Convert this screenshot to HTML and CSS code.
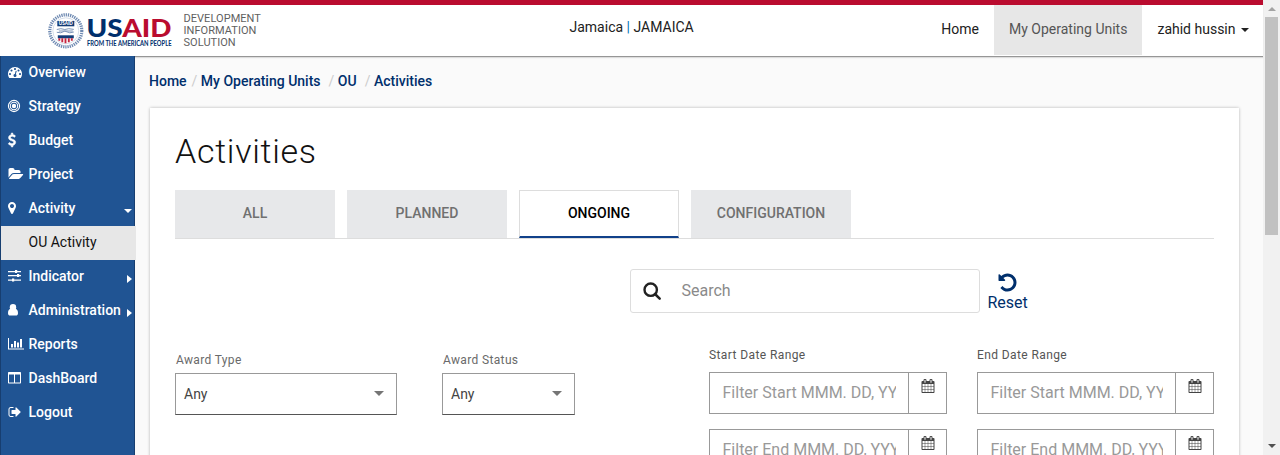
FILE: index.html
```
<!DOCTYPE html>
<html lang="en">
<head>
<meta charset="utf-8">
<title>Activities</title>
<link rel="stylesheet" href="styles.css">
</head>
<body>
<svg class="defs" aria-hidden="true">
  <symbol id="calendar" viewBox="0 0 1792 1792"><path d="M192 1664h288v-288h-288v288zm352 0h320v-288h-320v288zm-352-352h288v-320h-288v320zm352 0h320v-320h-320v320zm-352-384h288v-288h-288v288zm736 736h320v-288h-320v288zm-384-736h320v-288h-320v288zm768 736h288v-288h-288v288zm-384-352h320v-320h-320v320zm-352-864v-288q0-13-9.5-22.5t-22.5-9.5h-64q-13 0-22.5 9.5t-9.5 22.5v288q0 13 9.5 22.5t22.5 9.5h64q13 0 22.5-9.5t9.5-22.5zm736 864h288v-320h-288v320zm-384-384h320v-288h-320v288zm384 0h288v-288h-288v288zm32-480v-288q0-13-9.5-22.5t-22.5-9.5h-64q-13 0-22.5 9.5t-9.5 22.5v288q0 13 9.5 22.5t22.5 9.5h64q13 0 22.5-9.5t9.5-22.5zm384-64v1280q0 52-38 90t-90 38h-1408q-52 0-90-38t-38-90v-1280q0-52 38-90t90-38h128v-96q0-66 47-113t113-47h64q66 0 113 47t47 113v96h384v-96q0-66 47-113t113-47h64q66 0 113 47t47 113v96h128q52 0 90 38t38 90z"/></symbol>
</svg>
<div class="window">
  <div class="page">
    <header class="topbar">
      <svg class="logo" viewBox="0 0 126 40" width="126" height="40">
        <g transform="translate(-.2 4.300)">
          <circle cx="19" cy="19.500" r="16" fill="none" stroke="#6f8ab2" stroke-width="3.200" stroke-dasharray="1.300 .9"/>
          <circle cx="19" cy="19.500" r="13" fill="#fff" stroke="#b9c6da" stroke-width=".6"/>
          <path d="M10.500 9.700h17v5.300h-17z" fill="#123b77"/>
          <text x="12" y="14.200" class="seal-text" textLength="14" lengthAdjust="spacingAndGlyphs">USAID</text>
          <path d="M10 18.200l4-.8 4 .8 4-.8 5 .7M10 21l4 .5 4-1.700 5 1.700 4-.8M12 19.700h14" fill="none" stroke="#7c94b8" stroke-width="1"/>
          <path d="M11 24h16v3h-16z" fill="#123b77"/>
          <path d="M12.500 27v2.500M15.500 27v4M18.700 27v5M22 27v4M25 27v2.500" stroke="#c5243f" stroke-width="1.900"/>
        </g>
        <text x="39.500" y="30.300" class="word" textLength="85" lengthAdjust="spacingAndGlyphs"><tspan fill="#002f6c">US</tspan><tspan fill="#ba0c2f">AID</tspan></text>
        <text x="40" y="38.600" class="tagline" textLength="84.500" lengthAdjust="spacingAndGlyphs">FROM THE AMERICAN PEOPLE</text>
      </svg>
      <div class="product">DEVELOPMENT<br>INFORMATION<br>SOLUTION</div>
      <div class="country">Jamaica <span class="bar">|</span> JAMAICA</div>
      <nav class="topnav">
        <a class="topnav-link">Home</a>
        <a class="topnav-link current">My Operating Units</a>
        <a class="topnav-link user">zahid hussin <i class="caret"></i></a>
      </nav>
    </header>
    <div class="body">
      <nav class="sidebar">
        <a class="item"><svg class="icon" viewBox="0 0 1792 1792"><path d="M384 1152q0-53-37.500-90.500t-90.500-37.500-90.500 37.500-37.500 90.500 37.500 90.500 90.500 37.500 90.500-37.500 37.500-90.500zm192-448q0-53-37.500-90.500t-90.500-37.500-90.500 37.500-37.500 90.500 37.500 90.500 90.500 37.500 90.500-37.500 37.500-90.500zm428 481l101-382q6-26-7.500-48.500t-38.500-29.500-48 6.500-30 39.500l-101 382q-60 5-107 43.500t-63 98.500q-20 77 20 146t117 89 146-20 89-117q16-60-6-117t-72-91zm660-33q0-53-37.500-90.500t-90.500-37.500-90.500 37.500-37.500 90.500 37.500 90.500 90.500 37.500 90.500-37.500 37.500-90.500zm-640-640q0-53-37.500-90.500t-90.500-37.500-90.500 37.500-37.500 90.500 37.500 90.500 90.500 37.500 90.500-37.500 37.500-90.500zm448 192q0-53-37.500-90.500t-90.500-37.500-90.500 37.500-37.500 90.500 37.500 90.500 90.500 37.500 90.500-37.500 37.500-90.500zm320 448q0 261-141 483-19 29-54 29h-1402q-35 0-54-29-141-221-141-483 0-182 71-348t191-286 286-191 348-71 348 71 286 191 191 286 71 348z"/></svg>Overview</a>
        <a class="item"><svg class="icon" viewBox="0 0 14 14"><g fill="none" stroke="#fff" stroke-width="1.100"><circle cx="6" cy="7" r="5.600"/><circle cx="6" cy="7" r="3.700"/></g><circle cx="6" cy="7" r="2.200"/></svg>Strategy</a>
        <a class="item"><svg class="icon bold" viewBox="384 0 1792 1792"><path d="M1362 1185q0 153-99.500 263.500t-258.500 136.500v175q0 14-9 23t-23 9h-135q-13 0-22.500-9.500t-9.500-22.500v-175q-66-9-127.500-31t-101.500-44.500-74-48-46.500-37.500-17.500-18q-17-21-2-41l103-135q7-10 23-12 15-2 24 9l2 2q113 99 243 125 37 8 74 8 81 0 142.500-43t61.500-122q0-28-15-53t-33.500-42-58.500-37.500-66-32-80-32.500q-39-16-61.500-25t-61.500-26.500-62.500-31-56.500-35.500-53.500-42.500-43.500-49-35.500-58-21-66.500-8.500-78q0-138 98-242t255-134v-180q0-13 9.500-22.500t22.500-9.500h135q14 0 23 9t9 23v176q57 6 110.500 23t87 33.500 63.500 37.500 39 29 15 14q17 18 5 38l-81 146q-8 15-23 16-14 3-27-7-3-3-14.500-12t-39-26.500-58.500-32-74.500-26-85.500-11.500q-95 0-155 43t-60 111q0 26 8.500 48t29.500 41.500 39.500 33 56 31 60.500 27 70 27.500q53 20 81 31.500t76 35 75.500 42.500 62 50 53 63.500 31.500 76.500 13 94z"/></svg>Budget</a>
        <a class="item"><svg class="icon" viewBox="0 0 1792 1792"><path d="M1943 952q0 31-31 66l-336 396q-43 51-120.500 86.500t-143.500 35.500h-1088q-34 0-60.500-13t-26.500-43q0-31 31-66l336-396q43-51 120.500-86.500t143.500-35.500h1088q34 0 60.500 13t26.500 43zm-343-344v160h-832q-94 0-197 47.500t-164 119.500l-337 396-5 6q0-4-.5-12.500t-.5-12.500v-960q0-92 66-158t158-66h320q92 0 158 66t66 158v32h544q92 0 158 66t66 158z"/></svg>Project</a>
        <a class="item"><svg class="icon" viewBox="384 0 1792 1792"><path d="M1152 640q0-106-75-181t-181-75-181 75-75 181 75 181 181 75 181-75 75-181zm256 0q0 109-33 179l-364 774q-16 33-47.500 52t-67.500 19-67.500-19-46.500-52l-365-774q-33-70-33-179 0-212 150-362t362-150 362 150 150 362z"/></svg>Activity<i class="caret open"></i></a>
        <a class="item sub">OU Activity</a>
        <a class="item"><svg class="icon" viewBox="0 0 14 14"><path d="M0 2h7v1.300H0zM9 2h4v1.300H9zM7 1.100h2.200v3H7zM0 6h3v1.300H0zM5 6h8v1.300H5zM9 5.100h2.200v3H9zM0 10.500h5v1.300H0zM8 10.500h5v1.300H8zM4 9.600h2.200v3H4zM3 6h6v1.300H3zM6 10.500h2v1.300H6z"/></svg>Indicator<i class="caret closed"></i></a>
        <a class="item"><svg class="icon" viewBox="0 0 14 14"><circle cx="5" cy="4.200" r="3.200"/><path d="M2.700 5.800C.7 6.300 0 8 0 10.200 0 11.700.9 12.500 2.200 12.500h5.600c1.300 0 2.200-.8 2.200-2.300 0-2.200-.7-3.900-2.700-4.400-1.200 1.300-3.400 1.300-4.600 0z"/></svg>Administration<i class="caret closed"></i></a>
        <a class="item"><svg class="icon" viewBox="0 0 14 14"><path d="M0 1h1v10.500h15v1H0zM3 7h2v3.500H3zM6 4h2v6.500H6zM9 5.500h2v5H9zM12 2h2v8.500h-2z"/></svg>Reports</a>
        <a class="item"><svg class="icon" viewBox="0 0 14 14"><path d="M1 1h11c.6 0 1 .4 1 1v9.500c0 .6-.4 1-1 1H1c-.6 0-1-.4-1-1V2c0-.6.4-1 1-1zm0 2.500v8h5v-8zm6 0v8h5v-8z" fill-rule="evenodd"/></svg>DashBoard</a>
        <a class="item"><svg class="icon" viewBox="0 0 1792 1792"><path d="M704 1440q0 4 1 20t.5 26.500-3 23.500-10 19.500-20.500 6.500h-320q-119 0-203.500-84.500t-84.500-203.500v-704q0-119 84.500-203.500t203.500-84.500h320q13 0 22.500 9.500t9.500 22.500q0 4 1 20t.5 26.500-3 23.500-10 19.500-20.500 6.500h-320q-66 0-113 47t-47 113v704q0 66 47 113t113 47h312l11.500 1 11.500 3 8 5.500 7 9 2 13.500zm928-544q0 26-19 45l-544 544q-19 19-45 19t-45-19-19-45v-288h-448q-26 0-45-19t-19-45v-384q0-26 19-45t45-19h448v-288q0-26 19-45t45-19 45 19l544 544q19 19 19 45z"/></svg>Logout</a>
      </nav>
      <main class="content">
        <div class="crumbs"><a>Home</a><i>/</i><a>My Operating Units</a><i class="wide">/</i><a>OU</a><i class="wide">/</i><a>Activities</a></div>
        <section class="card">
          <h1>Activities</h1>
          <div class="tabs">
            <button class="tab">ALL</button>
            <button class="tab">PLANNED</button>
            <button class="tab active">ONGOING</button>
            <button class="tab">CONFIGURATION</button>
          </div>
          <div class="search-row">
            <div class="search"><svg viewBox="0 0 19 19" width="19" height="19"><circle cx="7.700" cy="7.700" r="6.200" fill="none" stroke="#222" stroke-width="2.400"/><path d="M12 12l4.700 4.700" stroke="#222" stroke-width="2.500" stroke-linecap="round"/></svg><span>Search</span></div>
            <a class="reset"><svg viewBox="0 0 1792 1792" width="21" height="21"><path fill="#002f6c" d="M1664 896q0 156-61 298t-164 245-245 164-298 61q-172 0-327-72.500t-264-204.500q-7-10-6.500-22.500t8.500-20.500l137-138q10-9 25-9 16 2 23 12 73 95 179 147t225 52q104 0 198.500-40.500t163.500-109.500 109.500-163.500 40.500-198.500-40.500-198.500-109.500-163.500-163.500-109.500-198.500-40.500q-98 0-188 35.500t-160 101.500l137 138q31 30 14 69-17 40-59 40h-448q-26 0-45-19t-19-45v-448q0-42 40-59 39-17 69 14l130 129q107-101 244.500-156.500t284.500-55.500q156 0 298 61t245 164 164 245 61 298z"/></svg><span>Reset</span></a>
          </div>
          <div class="filters">
            <div class="field type"><label>Award Type</label><div class="select">Any<i></i></div></div>
            <div class="field status"><label>Award Status</label><div class="select">Any<i></i></div></div>
            <div class="dates">
              <label>Start Date Range</label>
              <div class="date"><span>Filter Start MMM. DD, YYYY</span><b><svg width="14" height="14"><use href="#calendar"/></svg></b></div>
              <div class="date"><span>Filter End MMM. DD, YYYY</span><b><svg width="14" height="14"><use href="#calendar"/></svg></b></div>
            </div>
            <div class="dates end">
              <label>End Date Range</label>
              <div class="date"><span>Filter Start MMM. DD, YYYY</span><b><svg width="14" height="14"><use href="#calendar"/></svg></b></div>
              <div class="date"><span>Filter End MMM. DD, YYYY</span><b><svg width="14" height="14"><use href="#calendar"/></svg></b></div>
            </div>
          </div>
        </section>
      </main>
    </div>
  </div>
  <div class="scrollbar"><i class="up"></i><div class="thumb"></div><i class="down"></i></div>
</div>
</body>
</html>
```
FILE: styles.css
```
* { box-sizing: border-box; }
body { margin: 0; font: 14px/20px Roboto, sans-serif; color: #212121; overflow: hidden; }
i, b { font-style: normal; font-weight: 400; }
svg { display: block; flex: none; }
.defs { position: absolute; width: 0; height: 0; }
.window { display: flex; width: 1280px; height: 455px; overflow: hidden; }
.page { width: 1263px; display: flex; flex-direction: column; background: #fafafa; }

.topbar { position: relative; flex: none; display: flex; height: 57px; border-top: 5px solid #ba0c2f; border-bottom: 1px solid #969696; background: #fff; box-shadow: 0 1px 1px #ddd; }
.logo { margin: 2px 0 0 47px; overflow: visible; }
.word { font: 900 25px Lato, sans-serif; }
.tagline { font: 700 6.600px Lato, sans-serif; fill: #002f6c; }
.seal-text { font: 900 5px Lato, sans-serif; fill: #fff; }
.product { width: 100px; margin: 8px 0 0 10.500px; font-size: 11px; line-height: 12px; letter-spacing: .05px; color: #5f5f5f; }
.country { margin: 12px 0 0 286px; white-space: nowrap; }
.bar { color: #0076b6; }
.topnav { display: flex; margin-left: auto; height: 50px; }
.topnav-link { display: flex; align-items: center; padding: 0 14.500px 2px 15.500px; white-space: nowrap; }
.topnav-link.current { background: #e7e7e7; color: #555; }
.caret { border: 4px solid transparent; border-top-color: currentColor; border-bottom: 0; }
.user .caret { margin: 2px 0 0 5px; }

.body { display: flex; flex: 1; min-height: 0; }
.sidebar { flex: none; width: 136px; margin-top: -1px; z-index: 1; border-left: 1px solid #173e70; background: linear-gradient(90deg, #205493 133px, #173e70 133px 134px, transparent 134px); }
.item { display: flex; align-items: center; height: 34px; padding: 0 0 2px 7px; color: #fff; font-weight: 500; }
.icon { width: 14px; height: 14px; margin-right: 6.500px; fill: #fff; overflow: visible; }
.icon.bold { stroke: #fff; stroke-width: 70px; }
.item.sub { padding-left: 27.500px; background: #e7e7e7; color: #111; font-weight: 400; }
.item .caret.open { margin: 5px 4px 0 auto; }
.item .caret.closed { margin: 5px 4px 0 auto; border: 4px solid transparent; border-left: 5px solid #fff; border-right: 0; }

.content { flex: 1; padding: 14px 24px 0 13px; }
.crumbs { display: flex; height: 20px; font-weight: 500; color: #002f6c; white-space: nowrap; }
.crumbs i { margin: 0 3.500px 0 5px; color: #ccc; }
.crumbs i.wide { margin-left: 8px; }
.card { height: 400px; margin-top: 17px; margin-left: 1px; padding: 22px 25px; background: #fff; box-shadow: 0 0 3px rgba(0,0,0,.28); }
h1 { margin: 0; font-size: 34px; line-height: 42px; font-weight: 300; letter-spacing: .7px; color: #111; }
.tabs { display: flex; gap: 12px; height: 49px; margin-top: 18px; border-bottom: 1px solid #ddd; }
.tab { width: 160px; height: 48px; padding: 0 0 2px; border: 0; background: #e7e8ea; font: 500 14px Roboto, sans-serif; color: #707070; }
.tab.active { padding-bottom: 1px; background: #fff; border: 1px solid #ddd; border-bottom: 2px solid #11418a; color: #000; }
.search-row { display: flex; margin: 30px 0 0 455px; gap: 7.500px; }
.search { display: flex; align-items: center; width: 350px; height: 44px; padding-left: 12px; border: 1px solid #ddd; border-radius: 3px; color: #8a8a8a; font-size: 16px; }
.search span { margin-left: 19.500px; }
.reset { display: flex; flex-direction: column; align-items: center; padding-top: 3px; font-size: 16px; line-height: 20px; color: #002f6c; }
.filters { display: flex; padding-top: 34px; }
label { display: block; font-size: 12px; line-height: 16px; letter-spacing: .35px; color: #6a6a6a; }
.field { padding-top: 5px; }
.field label { padding-left: 1px; }
.type { width: 222px; }
.status { width: 133px; margin-left: 45px; }
.select { display: flex; align-items: center; justify-content: space-between; height: 42px; margin-top: 5px; padding: 0 12px 1px 8px; border: 1px solid #999; border-bottom-color: #555; color: #444; }
.select i { border: 5px solid transparent; border-top-color: #757575; border-bottom: 0; }
.dates { width: 238px; margin-left: 134px; }
.dates.end { width: 237px; margin-left: 30px; }
.dates label { color: #555; letter-spacing: .4px; }
.date { display: flex; height: 42px; margin-top: 9px; border: 1px solid #999; font-size: 16px; color: #999; }
.date + .date { margin-top: 15px; }
.date span { flex: 1; min-width: 0; margin: 0 12px 0 12.500px; overflow: hidden; line-height: 40px; white-space: nowrap; }
.date b { width: 38px; padding: 6px 0 0 11.500px; border-left: 1px solid #999; }
.date svg { fill: #444; }

.scrollbar { display: flex; flex-direction: column; width: 17px; background: #f1f1f1; }
.scrollbar i { margin: 7px auto 6px; border: 4px solid transparent; }
.scrollbar .up { border-top: 0; border-bottom-color: #a3a3a3; }
.scrollbar .down { margin: auto auto 7px; border-bottom: 0; border-top-color: #505050; }
.thumb { width: 13px; height: 218px; margin-left: 2px; background: #c1c1c1; }
```
